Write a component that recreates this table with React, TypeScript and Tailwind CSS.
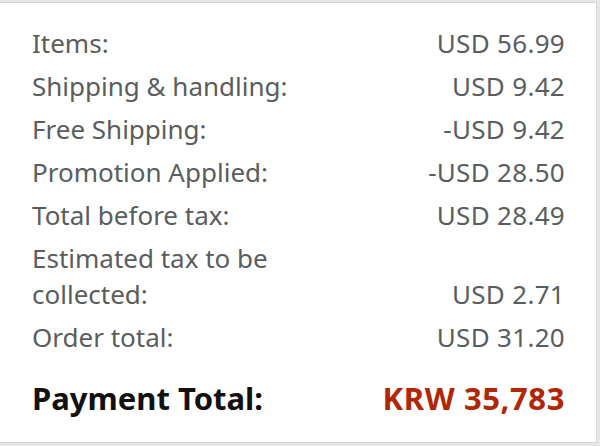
import React from 'react';

const rows: { label: string; value: string }[] = [
  { label: 'Items:', value: 'USD 56.99' },
  { label: 'Shipping & handling:', value: 'USD 9.42' },
  { label: 'Free Shipping:', value: '-USD 9.42' },
  { label: 'Promotion Applied:', value: '-USD 28.50' },
  { label: 'Total before tax:', value: 'USD 28.49' },
  { label: 'Estimated tax to be collected:', value: 'USD 2.71' },
  { label: 'Order total:', value: 'USD 31.20' },
];

export default function App() {
  return (
    <div
      className="w-[600px] h-[446px] bg-[#e6e6e6] pt-[2px] pr-[3px] pb-[3px] overflow-hidden"
      style={{ fontFamily: '"Noto Sans", "Open Sans", sans-serif' }}
    >
      <div className="h-full bg-white border border-[#d5d5d5] border-l-0 pl-[32px] pr-[31px] pt-[22px]">
        {/* Summary rows */}
        <div className="flex flex-col gap-[7px]">
          {rows.map((r) => (
            <div key={r.label} className="flex justify-between items-end text-[26px] leading-[36px] text-[#5a5d5d]">
              <span className="w-[300px]">{r.label}</span>
              <span className="whitespace-nowrap tracking-[0.3px]">{r.value}</span>
            </div>
          ))}
        </div>

        {/* Payment total */}
        <div className="flex justify-between items-end mt-[25px] text-[31px] leading-[36px] font-bold">
          <span className="text-[#111111]">Payment Total:</span>
          <span className="text-[#b12704] tracking-[0.6px]">KRW 35,783</span>
        </div>
      </div>
    </div>
  );
}
